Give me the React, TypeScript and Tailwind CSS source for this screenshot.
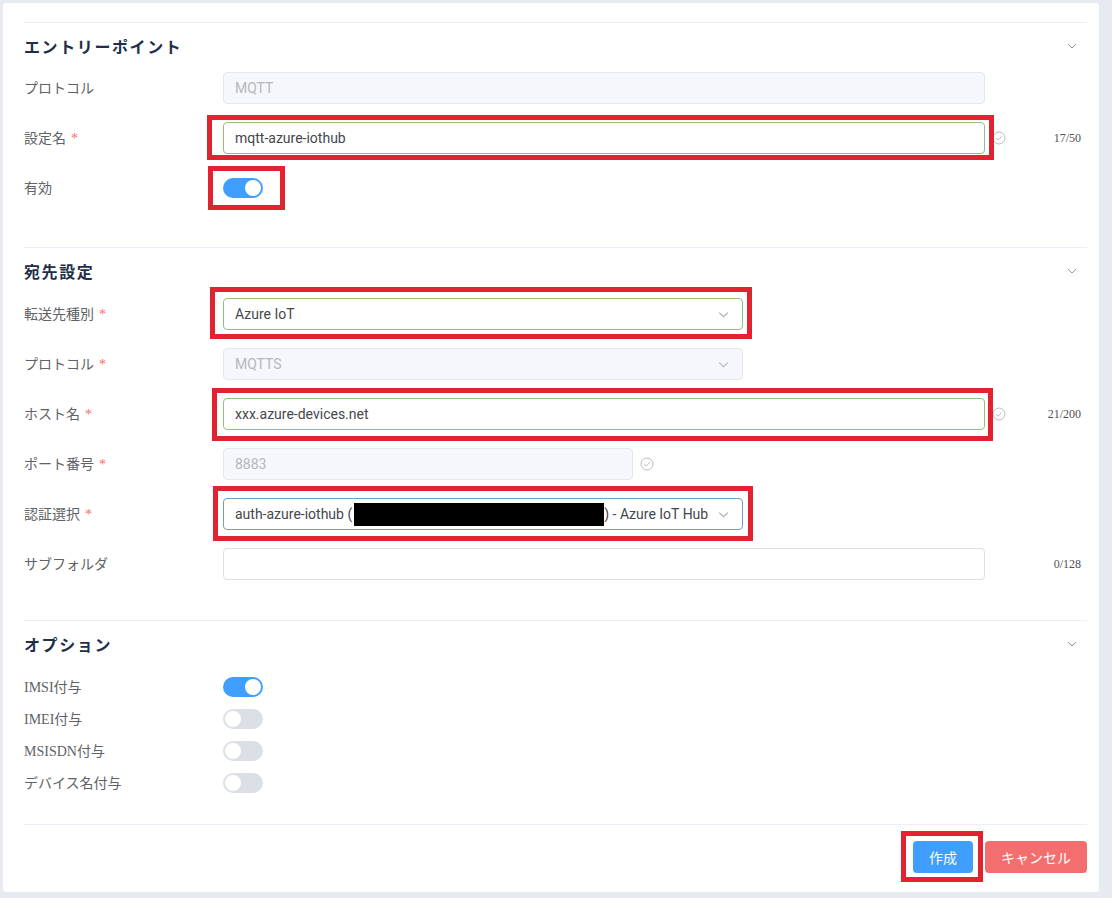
import React from "react";

const labelFont = { fontFamily: '"Liberation Serif", "Noto Sans CJK JP", serif' };
const inputFont = { fontFamily: 'Roboto, "Noto Sans CJK JP", sans-serif' };
const headFont = { fontFamily: '"Noto Sans CJK JP", sans-serif' };

function Chevron({ className }: { className: string }) {
  return (
    <svg viewBox="0 0 12 12" className={className} fill="none" stroke="currentColor" strokeWidth="1">
      <path d="M2 4.2 L6 8 L10 4.2" />
    </svg>
  );
}

function CheckCircle() {
  return (
    <svg viewBox="0 0 14 14" className="w-[14px] h-[14px] text-[#b8bcc4]" fill="none" stroke="currentColor" strokeWidth="1">
      <circle cx="7" cy="7" r="6" />
      <path d="M4.2 7.2 L6.2 9 L9.8 5.2" />
    </svg>
  );
}

function Label({ text, required }: { text: string; required?: boolean }) {
  return (
    <div className="w-[199px] shrink-0 text-[14px] text-[#606266]" style={labelFont}>
      {text}
      {required && <span className="ml-[5px] text-[#f56c6c]">*</span>}
    </div>
  );
}

function Toggle({ on }: { on: boolean }) {
  return (
    <div className={`w-[40px] h-[20px] rounded-full relative ${on ? "bg-[#409eff]" : "bg-[#dcdfe6]"}`}>
      <div className={`absolute top-[2px] w-[16px] h-[16px] rounded-full bg-white ${on ? "left-[22px]" : "left-[2px]"}`} />
    </div>
  );
}

function Counter({ text }: { text: string }) {
  return (
    <span className="ml-auto mr-[6px] text-[12px] text-[#505255]" style={labelFont}>
      {text}
    </span>
  );
}

function SectionHead({ title, h }: { title: string; h: string }) {
  return (
    <div className={`flex items-center justify-between pb-[4px] ${h}`}>
      <span className="text-[16px] font-bold tracking-[1.6px] text-[#1f2f4a]" style={headFont}>
        {title}
      </span>
      <Chevron className="w-[12px] h-[12px] mr-[9px] text-[#8c9099]" />
    </div>
  );
}

export default function App() {
  return (
    <div className="w-[1112px] h-[898px] bg-[#e7eaf0] pt-[3px] pl-[3px] pr-[13px]">
      <div className="bg-white rounded-[3px] h-[889px] pt-[19px] pl-[21px] pr-[12px]">
        {/* エントリーポイント */}
        <section className="border-t border-[#ebeef5] pb-[43px]">
          <SectionHead title="エントリーポイント" h="h-[49px]" />
          <div className="flex items-center h-[32px] mb-[18px]">
            <Label text="プロトコル" />
            <div className="w-[762px] h-[32px] rounded-[4px] border border-[#e4e7ed] bg-[#f5f7fa] px-[11px] flex items-center text-[14px] text-[#b4b8bf]" style={inputFont}>
              MQTT
            </div>
          </div>
          <div className="flex items-center h-[32px] mb-[18px]">
            <Label text="設定名" required />
            <div className="relative">
              <div className="w-[762px] h-[32px] rounded-[4px] border border-[#8cc47a] px-[11px] flex items-center text-[14px] text-[#45474b]" style={inputFont}>
                mqtt-azure-iothub
              </div>
              <span className="absolute -left-[16px] -right-[9px] -top-[7px] -bottom-[6px] border-[5px] border-[#e0232e] pointer-events-none" />
            </div>
            <div className="flex-1 flex items-center">
              <span className="ml-[7px]">
                <CheckCircle />
              </span>
              <Counter text="17/50" />
            </div>
          </div>
          <div className="flex items-center h-[32px]">
            <Label text="有効" />
            <div className="relative">
              <Toggle on />
              <span className="absolute -left-[15px] -right-[22px] -top-[12px] -bottom-[12px] border-[5px] border-[#e0232e] pointer-events-none" />
            </div>
          </div>
        </section>

        {/* 宛先設定 */}
        <section className="border-t border-[#ebeef5] pb-[40px]">
          <SectionHead title="宛先設定" h="h-[50px]" />
          <div className="flex items-center h-[32px] mb-[18px]">
            <Label text="転送先種別" required />
            <div className="relative">
              <div className="w-[520px] h-[32px] rounded-[4px] border border-[#8cc47a] pl-[11px] pr-[12px] flex items-center justify-between text-[14px] text-[#45474b]" style={inputFont}>
                <span>Azure IoT</span>
                <Chevron className="w-[13px] h-[13px] text-[#a8abb2]" />
              </div>
              <span className="absolute -left-[13px] -right-[9px] -top-[11px] -bottom-[9px] border-[5px] border-[#e0232e] pointer-events-none" />
            </div>
          </div>
          <div className="flex items-center h-[32px] mb-[18px]">
            <Label text="プロトコル" required />
            <div className="w-[520px] h-[32px] rounded-[4px] border border-[#e4e7ed] bg-[#f5f7fa] pl-[11px] pr-[12px] flex items-center justify-between text-[14px] text-[#b4b8bf]" style={inputFont}>
              <span>MQTTS</span>
              <Chevron className="w-[13px] h-[13px] text-[#b4b8bf]" />
            </div>
          </div>
          <div className="flex items-center h-[32px] mb-[18px]">
            <Label text="ホスト名" required />
            <div className="relative">
              <div className="w-[762px] h-[32px] rounded-[4px] border border-[#8cc47a] px-[11px] flex items-center text-[14px] text-[#45474b]" style={inputFont}>
                xxx.azure-devices.net
              </div>
              <span className="absolute -left-[11px] -right-[8px] -top-[10px] -bottom-[11px] border-[5px] border-[#e0232e] pointer-events-none" />
            </div>
            <div className="flex-1 flex items-center">
              <span className="ml-[7px]">
                <CheckCircle />
              </span>
              <Counter text="21/200" />
            </div>
          </div>
          <div className="flex items-center h-[32px] mb-[18px]">
            <Label text="ポート番号" required />
            <div className="w-[410px] h-[32px] rounded-[4px] border border-[#e4e7ed] bg-[#f5f7fa] px-[11px] flex items-center text-[14px] text-[#b4b8bf]" style={inputFont}>
              8883
            </div>
            <span className="ml-[7px]">
              <CheckCircle />
            </span>
          </div>
          <div className="flex items-center h-[32px] mb-[18px]">
            <Label text="認証選択" required />
            <div className="relative">
              <div className="w-[520px] h-[32px] rounded-[4px] border border-[#6f9fc6] pl-[11px] pr-[12px] flex items-center justify-between text-[14px] text-[#45474b]" style={inputFont}>
                <span className="flex items-center whitespace-nowrap">
                  auth-azure-iothub (
                  <span className="inline-block w-[250px] h-[23px] bg-black ml-[2px]" />
                  ) - Azure IoT Hub
                </span>
                <Chevron className="w-[13px] h-[13px] text-[#a8abb2]" />
              </div>
              <span className="absolute -left-[10px] -right-[10px] -top-[12px] -bottom-[11px] border-[5px] border-[#e0232e] pointer-events-none" />
            </div>
          </div>
          <div className="flex items-center h-[32px]">
            <Label text="サブフォルダ" />
            <div className="w-[762px] h-[32px] rounded-[4px] border border-[#dcdfe6]" />
            <div className="flex-1 flex items-center">
              <Counter text="0/128" />
            </div>
          </div>
        </section>

        {/* オプション */}
        <section className="border-t border-[#ebeef5] pb-[25px]">
          <SectionHead title="オプション" h="h-[50px]" />
          {[
            { t: "IMSI付与", on: true },
            { t: "IMEI付与", on: false },
            { t: "MSISDN付与", on: false },
            { t: "デバイス名付与", on: false },
          ].map((o) => (
            <div key={o.t} className="flex items-center h-[32px]">
              <Label text={o.t} />
              <Toggle on={o.on} />
            </div>
          ))}
        </section>

        {/* footer */}
        <div className="border-t border-[#ebeef5] pt-[16px] flex justify-end gap-[12px]">
          <div className="relative">
            <button className="w-[60px] h-[32px] rounded-[4px] bg-[#409eff] text-white text-[14px]" style={headFont}>
              作成
            </button>
            <span className="absolute -left-[12px] -right-[10px] -top-[10px] -bottom-[9px] border-[5px] border-[#e0232e] pointer-events-none" />
          </div>
          <button className="w-[102px] h-[32px] rounded-[4px] bg-[#f36f6f] text-white text-[14px]" style={headFont}>
            キャンセル
          </button>
        </div>
      </div>
    </div>
  );
}
